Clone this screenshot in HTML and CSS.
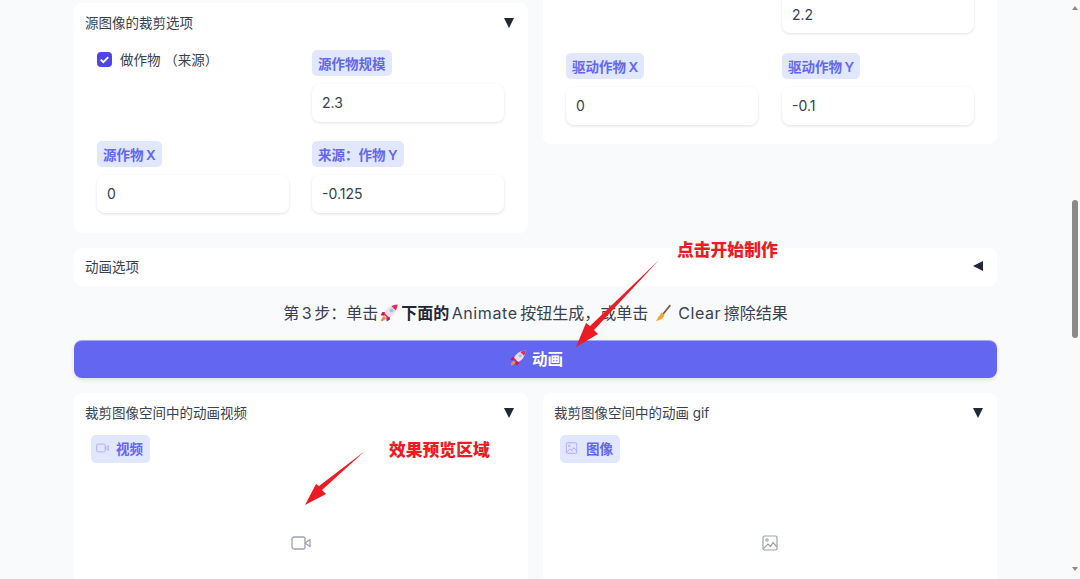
FILE: index.html
```html
<!DOCTYPE html>
<html lang="zh-CN">
  <head>
    <meta charset="UTF-8" />
    <meta name="viewport" content="width=device-width, initial-scale=1.0" />
    <title>动画</title>
    <link rel="stylesheet" href="styles.css">
  </head>
  <body>
    <main class="page">
      <div class="columns">
        <section class="card">
          <div class="card-title"><span>源图像的裁剪选项</span><span class="arrow"></span></div>
          <div class="fields">
            <label class="check"><span class="checkbox"><svg viewBox="0 0 16 16"><path d="M4 8.2l2.7 2.6L12 5.4" /></svg></span>做作物 （来源）</label>
            <div class="field">
              <span class="badge">源作物规模</span>
              <div class="input">2.3</div>
            </div>
            <div class="field">
              <span class="badge">源作物 X</span>
              <div class="input">0</div>
            </div>
            <div class="field">
              <span class="badge">来源：作物 Y</span>
              <div class="input">-0.125</div>
            </div>
          </div>
        </section>

        <section class="card card-driving">
          <div class="fields">
            <div class="field"></div>
            <div class="field">
              <div class="input input-cut">2.2</div>
            </div>
            <div class="field">
              <span class="badge">驱动作物 X</span>
              <div class="input">0</div>
            </div>
            <div class="field">
              <span class="badge">驱动作物 Y</span>
              <div class="input">-0.1</div>
            </div>
          </div>
        </section>
      </div>

      <section class="card card-row">
        <div class="card-title"><span>动画选项</span><span class="arrow arrow-left"></span></div>
      </section>

      <p class="step">第 3 步：单击<svg class="emoji" viewBox="0 0 16 16"><use href="#rocket" /></svg><strong>下面的</strong> <span class="latin">Animate</span> 按钮生成，或单击<svg class="emoji emoji-broom" viewBox="0 0 16 16"><use href="#broom" /></svg><span class="latin">Clear</span> 擦除结果</p>

      <button class="animate"><svg class="emoji" viewBox="0 0 16 16"><use href="#rocket" /></svg>动画</button>

      <div class="columns">
        <section class="card card-output">
          <div class="card-title"><span>裁剪图像空间中的动画视频</span><span class="arrow"></span></div>
          <span class="badge badge-icon">
            <svg class="icon" viewBox="0 0 20 16"><use href="#video" /></svg>视频
          </span>
          <div class="placeholder">
            <svg class="icon-large" viewBox="0 0 20 16"><use href="#video" /></svg>
          </div>
        </section>

        <section class="card card-output">
          <div class="card-title"><span>裁剪图像空间中的动画 gif</span><span class="arrow"></span></div>
          <span class="badge badge-icon">
            <svg class="icon icon-small" viewBox="0 0 16 16"><use href="#picture" /></svg>图像
          </span>
          <div class="placeholder">
            <svg class="icon-large icon-picture" viewBox="0 0 16 16"><use href="#picture" /></svg>
          </div>
        </section>
      </div>
    </main>

    <div class="scrollbar">
      <span class="scroll-up"></span>
      <span class="scroll-thumb"></span>
      <span class="scroll-down"></span>
    </div>

    <!-- red notes drawn on top of the screenshot -->
    <span class="note note-start">点击开始制作</span>
    <span class="note note-preview">效果预览区域</span>
    <svg class="notes" viewBox="0 0 1080 579">
      <path d="M659 260 L594 330 L598 334 L576 347 L586 323 L590 326 Z" />
      <path d="M365 451 L322 490 L326 494 L305 505 L316 484 L319 486 Z" />
    </svg>

    <svg class="defs" width="0" height="0">
      <symbol id="rocket" viewBox="0 0 16 16">
        <path d="M5 7 2.200 7.200.5 10 4 10.500z" fill="#c8175a" />
        <path d="M9 11 8.800 13.800 6 15.500 5.500 12z" fill="#c8175a" />
        <path d="M15.500.5C10.500.6 5.800 3.500 4 8L8 12C12.500 10.200 15.400 5.500 15.500.5z" fill="#f2dfe6" />
        <path d="M15.500.5C13.600.6 11.800 1.200 10.200 2L14 5.800C14.900 4.200 15.400 2.400 15.500.5z" fill="#e5265f" />
        <path d="M4 8 8 12 6.800 12.600 3.400 9.200z" fill="#e0245e" />
        <circle cx="10.300" cy="5.700" r="1.700" fill="#8ccaf0" />
        <path d="M3.600 10.600 5.400 12.400C4.600 14.200 2.800 15.200.8 15.400 1 13.500 1.800 11.300 3.600 10.600z" fill="#f58a3c" />
      </symbol>
      <symbol id="broom" viewBox="0 0 16 16">
        <path d="M14.500 1 8 9" stroke="#8d5a3c" stroke-width="1.500" fill="none" />
        <path d="M6.600 7.500 9.300 9.800C8.500 12.500 5.500 14.800 1.500 15c1.200-1 1.800-2 2-3.200C4.500 11 5.800 9.500 6.600 7.500z" fill="#f5a623" />
      </symbol>
      <symbol id="video" viewBox="0 0 20 16">
        <rect x="1" y="2" width="13" height="12" rx="2" fill="none" stroke="currentColor" stroke-width="1.300" />
        <path d="M14 8l5-3.500v7z" fill="none" stroke="currentColor" stroke-width="1.300" stroke-linejoin="round" />
      </symbol>
      <symbol id="picture" viewBox="0 0 16 16">
        <rect x="1" y="1" width="14" height="14" rx="1.500" fill="none" stroke="currentColor" stroke-width="1.200" />
        <circle cx="5" cy="5" r="1.200" fill="none" stroke="currentColor" stroke-width="1.100" />
        <path d="M1.500 13.500 6 9l2.500 2.500L11 7.500l4 4.500" fill="none" stroke="currentColor" stroke-width="1.200" />
      </symbol>
    </svg>
  </body>
</html>
```

FILE: styles.css
```css
html,
body {
  margin: 0;
  padding: 0;
  height: 579px;
  overflow: hidden;
}

body {
  background-color: #f9fafb;
  font-family: Inter, "Noto Sans CJK SC", sans-serif;
  font-size: 13.5px;
  color: #374151;
}

.page {
  width: 923px;
  margin-left: 74px;
  padding-top: 3px;
}

.columns {
  display: flex;
  align-items: flex-start;
  gap: 15px;
}

.card {
  flex: 1;
  min-width: 0;
  box-sizing: border-box;
  background-color: #fff;
  border-radius: 8px;
}

.card-title {
  display: flex;
  justify-content: space-between;
  align-items: center;
  box-sizing: border-box;
  height: 40px;
  padding: 0 14px 2px 11px;
}

.arrow {
  width: 0;
  height: 0;
  border-left: 5px solid transparent;
  border-right: 5px solid transparent;
  border-top: 10px solid #1f2937;
  margin-top: 2px;
}

.arrow-left {
  border-top: 5px solid transparent;
  border-bottom: 5px solid transparent;
  border-right: 10px solid #1f2937;
  border-left: none;
  margin-top: 0;
}

.fields {
  display: grid;
  grid-template-columns: 192px 192px;
  column-gap: 23px;
  row-gap: 19px;
  padding: 7px 23px 20px;
}

.check {
  display: flex;
  align-items: center;
  align-self: start;
  gap: 8px;
  height: 20px;
  margin-top: -1px;
}

.checkbox {
  width: 15px;
  height: 15px;
  border-radius: 4px;
  background-color: #4f46e5;
}

.checkbox svg {
  display: block;
}

.checkbox path {
  fill: none;
  stroke: #fff;
  stroke-width: 2;
}

.field {
  display: flex;
  flex-direction: column;
  align-items: flex-start;
  gap: 8px;
}

.badge {
  display: flex;
  align-items: center;
  height: 26px;
  padding: 0 6px;
  border-radius: 5px;
  background-color: #e0e7ff;
  color: #6366f1;
  font-weight: 600;
  word-spacing: -1px;
  white-space: nowrap;
}

.input {
  width: 100%;
  height: 38px;
  box-sizing: border-box;
  padding: 0 10px;
  font-size: 14px;
  line-height: 38px;
  border-radius: 8px;
  background-color: #fff;
  box-shadow: 0 1px 3px rgba(0, 0, 0, 0.12);
}

.card-driving {
  margin-top: -10px;
}

.card-driving .fields {
  column-gap: 24px;
  row-gap: 20px;
  padding-top: 0;
  padding-bottom: 19px;
}

.input-cut {
  height: 40px;
  border-radius: 0 0 8px 8px;
  line-height: 38px;
  padding-top: 3px;
}

.card-row {
  margin-top: 15px;
}

.card-row .card-title {
  height: 38px;
}

.step {
  margin: 15px 0 0;
  height: 39px;
  font-size: 16px;
  line-height: 24px;
  text-align: center;
  word-spacing: -2px;
  color: #374151;
}

.step strong {
  color: #1f2937;
}

.latin {
  letter-spacing: 0.6px;
}

.emoji {
  width: 18px;
  height: 18px;
  margin: 0 3px 0 2px;
  vertical-align: -3px;
}

.emoji-broom {
  margin: 0 6px;
}

.animate {
  display: flex;
  justify-content: center;
  align-items: center;
  gap: 3px;
  width: 100%;
  height: 38px;
  padding: 0 0 3px;
  border: none;
  border-top: 1px solid #a5a8f8;
  border-radius: 8px;
  background-color: #6366f1;
  box-shadow: 0 2px 4px rgba(0, 0, 0, 0.1);
  color: #fff;
  font-family: inherit;
  font-size: 15.5px;
  font-weight: 700;
  margin-bottom: 15px;
}

.animate .emoji {
  width: 16px;
  height: 16px;
}

.card-output {
  height: 200px;
}

.badge-icon {
  display: inline-flex;
  gap: 7px;
  box-sizing: border-box;
  height: 28px;
  margin-left: 17px;
  margin-top: 2px;
  padding: 0 7px 2px 5px;
}

.icon {
  width: 13px;
  height: 12px;
  color: #a5a8f8;
}

.icon-small {
  margin-right: 1px;
}

.placeholder {
  display: flex;
  justify-content: center;
  margin-top: 72px;
  color: #9ca3af;
}

.icon-large {
  width: 20px;
  height: 16px;
  margin-right: 1px;
}

.icon-picture {
  width: 16px;
  margin-right: 0;
}

.scrollbar {
  position: fixed;
  top: 0;
  right: 0;
  bottom: 0;
  width: 10px;
  background-color: #fafafa;
}

.scroll-thumb {
  position: absolute;
  top: 200px;
  left: 2px;
  width: 6px;
  height: 138px;
  border-radius: 3px;
  background-color: #8a8a8a;
}

.scroll-up,
.scroll-down {
  position: absolute;
  left: 2px;
  width: 0;
  height: 0;
  border-left: 3px solid transparent;
  border-right: 3px solid transparent;
}

.scroll-up {
  top: 6px;
  border-bottom: 4px solid #8a8a8a;
}

.scroll-down {
  bottom: 8px;
  border-top: 4px solid #8a8a8a;
}

.notes {
  position: absolute;
  top: 0;
  left: 0;
  width: 1080px;
  height: 579px;
  pointer-events: none;
}

.notes path {
  fill: #ed1c24;
}

.note {
  position: absolute;
  font-size: 16.8px;
  font-weight: 900;
  color: #ed1c24;
  white-space: nowrap;
}

.note-start {
  top: 237px;
  left: 677px;
}

.note-preview {
  top: 437px;
  left: 389px;
}

.defs {
  position: absolute;
}
```
